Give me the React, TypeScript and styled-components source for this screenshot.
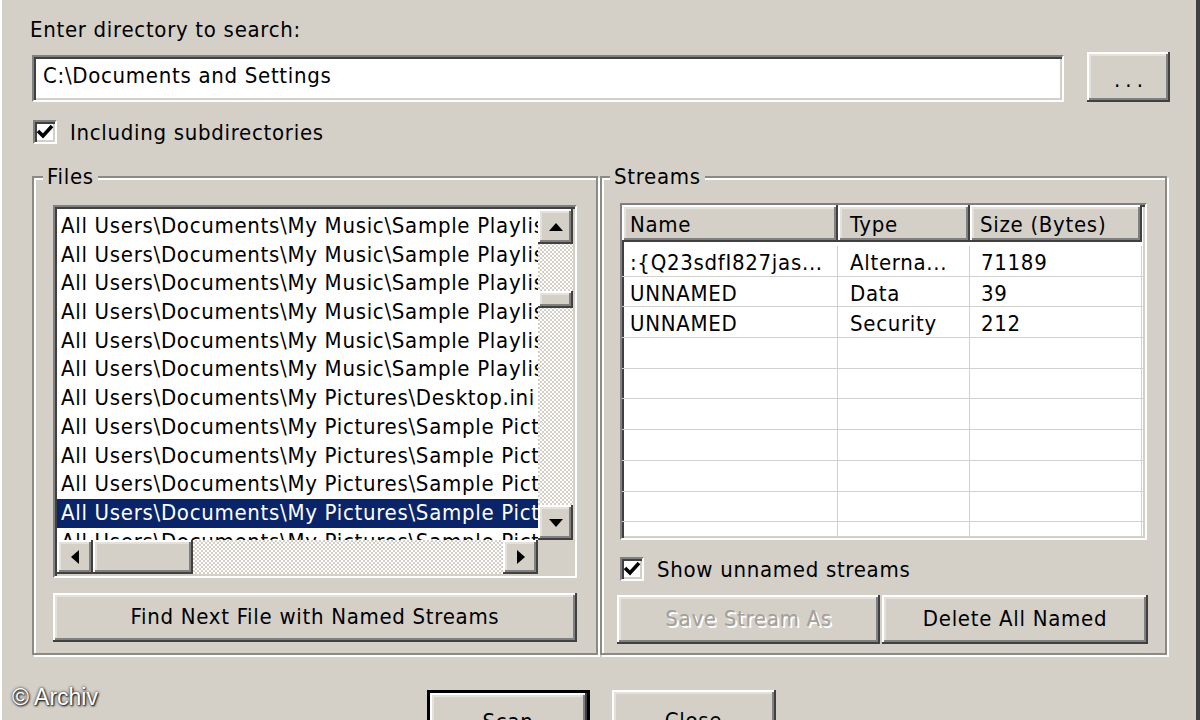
import React from 'react'
import styled, { createGlobalStyle, css } from 'styled-components'

const GlobalStyle = createGlobalStyle`
  html, body {
    margin: 0;
    padding: 0;
    background: #d4d0c8;
  }
  body {
    font-family: "DejaVu Sans Condensed", "DejaVu Sans", sans-serif;
    font-size: 22px;
    letter-spacing: 0.7px;
    color: #000;
  }
  * {
    box-sizing: border-box;
  }
`

const raised = css`
  background: #d4d0c8;
  box-shadow: inset -2px -2px 0 #404040, inset 2px 2px 0 #fff, inset -4px -4px 0 #808080,
    inset 4px 4px 0 #e4e1da;
`

const sunken = css`
  border: 2px solid;
  border-color: #808080 #fff #fff #808080;
  box-shadow: inset 2px 2px 0 #404040, inset -2px -2px 0 #d4d0c8;
`

const stipple = css`
  background-color: #ecebe7;
  background-image: repeating-conic-gradient(#d4d0c8 0 25%, #fff 0 50%);
  background-size: 4px 4px;
`

const Window = styled.div`
  position: relative;
  width: 1200px;
  height: 720px;
  overflow: hidden;
  display: flex;
  flex-direction: column;
  background: #d4d0c8;
  box-shadow: inset -4px 0 0 #404040, inset 2px 0 0 #fff;
`

const Content = styled.div`
  padding: 17px 0 0 30px;
  display: flex;
  flex-direction: column;
`

const Label = styled.div`
  height: 26px;
  line-height: 26px;
  white-space: nowrap;
`

const InputRow = styled.div`
  display: flex;
  align-items: flex-end;
  margin-top: 9px;
`

const PathInput = styled.div`
  margin-left: 2px;
  width: 1032px;
  height: 47px;
  background: #fff;
  ${sunken};
  display: flex;
  align-items: center;
  padding: 0 0 6px 9px;
  white-space: nowrap;
`

const Button = styled.div<{ $w: number; $h?: number; $disabled?: boolean }>`
  width: ${p => p.$w}px;
  height: ${p => p.$h ?? 49}px;
  flex: none;
  ${raised};
  display: flex;
  align-items: center;
  justify-content: center;
  padding-bottom: 2px;
  white-space: nowrap;
  color: ${p => (p.$disabled ? '#a3a09a' : '#000')};
  text-shadow: ${p => (p.$disabled ? '2px 2px 0 #fff' : 'none')};
`

const BrowseButton = styled(Button)`
  margin-left: 23px;
  letter-spacing: 5px;
  padding: 4px 0 0 5px;
`

const BottomButton = styled(Button)<{ $default?: boolean }>`
  border: ${p => (p.$default ? '3px solid #000' : 'none')};
  padding: 10px 0 0;
`

const CheckRow = styled.div<{ $mt: number; $ml?: number }>`
  display: flex;
  align-items: center;
  gap: 13px;
  height: 26px;
  margin-top: ${p => p.$mt}px;
  margin-left: ${p => p.$ml ?? 0}px;
  white-space: nowrap;
`

const Box = styled.div`
  width: 24px;
  height: 24px;
  background: #fff;
  ${sunken};
  display: flex;
  align-items: center;
  justify-content: center;
`

const GroupRow = styled.div`
  display: flex;
  gap: 2px;
  margin: 19px 0 0 2px;
`

const Group = styled.fieldset<{ $w: number; $pad: string }>`
  margin: 0;
  min-width: 0;
  width: ${p => p.$w}px;
  height: 491px;
  padding: ${p => p.$pad};
  border: 2px solid #8c8a85;
  box-shadow: inset 2px 2px 0 #fff, 2px 2px 0 #fff;
  display: flex;
  flex-direction: column;
`

const Legend = styled.legend`
  margin-left: -10px;
  padding: 0 4px;
  height: 26px;
  line-height: 26px;
  background: #d4d0c8;
`

const ListBox = styled.div`
  height: 373px;
  background: #fff;
  ${sunken};
  padding: 2px;
  display: grid;
  grid-template-columns: 1fr 35px;
  grid-template-rows: 1fr 34px;
`

const Items = styled.div`
  overflow: hidden;
  padding-top: 3px;
`

const Item = styled.div<{ $selected?: boolean }>`
  height: 28.7px;
  line-height: 28.7px;
  padding-left: 4px;
  white-space: nowrap;
  background: ${p => (p.$selected ? '#0a246a' : 'transparent')};
  color: ${p => (p.$selected ? '#fff' : '#000')};
`

const VScroll = styled.div`
  ${stipple};
  display: flex;
  flex-direction: column;
`

const HScroll = styled.div`
  ${stipple};
  display: flex;
`

const Track = styled.div<{ $before?: number }>`
  flex: 1;
  padding-top: ${p => p.$before ?? 0}px;
`

const Thumb = styled.div<{ $w?: number; $h?: number }>`
  flex: none;
  width: ${p => (p.$w ? `${p.$w}px` : '100%')};
  height: ${p => (p.$h ? `${p.$h}px` : '100%')};
  ${raised};
`

const ArrowButton = styled.div<{ $w: number; $h: number }>`
  flex: none;
  width: ${p => p.$w}px;
  height: ${p => p.$h}px;
  ${raised};
  display: flex;
  align-items: center;
  justify-content: center;
`

const Corner = styled.div`
  background: #d4d0c8;
`

const ListView = styled.div`
  height: 337px;
  background: #fff;
  ${sunken};
  overflow: hidden;
`

const Header = styled.div`
  display: flex;
  height: 37px;
`

const HeaderCell = styled.div<{ $w: number; $pl: number }>`
  flex: none;
  width: ${p => p.$w}px;
  ${raised};
  padding: 3px 0 0 ${p => p.$pl}px;
  line-height: 33px;
  white-space: nowrap;
`

const Body = styled.div`
  padding-top: 4px;
`

const Row = styled.div`
  display: flex;
  height: 30.7px;
  border-bottom: 1px solid #d2d1cd;
`

const Cell = styled.div<{ $w: number; $pl: number }>`
  flex: none;
  width: ${p => p.$w}px;
  padding: 3px 0 0 ${p => p.$pl}px;
  line-height: 27px;
  white-space: nowrap;
  overflow: hidden;
  border-right: 1px solid #d2d1cd;
`

const ButtonRow = styled.div`
  display: flex;
  gap: 2px;
  margin: 13px 0 0 -3px;
`

const BottomRow = styled.div`
  display: flex;
  justify-content: center;
  gap: 22px;
  margin-top: 35px;
  padding-left: 2px;
`

const Watermark = styled.div`
  position: absolute;
  left: 12px;
  bottom: 9px;
  font-family: "Liberation Sans", Arial, sans-serif;
  font-size: 23px;
  letter-spacing: 0;
  color: #fff;
  text-shadow: 0 0 3px #222, 1px 1px 2px #000;
`

const Check = () => (
  <svg width="18" height="18" viewBox="0 0 18 18">
    <polyline points="2,8 7,13 16,3" fill="none" stroke="#000" strokeWidth="3.6" />
  </svg>
)

const Arrow = ({ dir }: { dir: 'up' | 'down' | 'left' | 'right' }) => {
  const pts = {
    up: '0,8 7,0 14,8',
    down: '0,0 14,0 7,8',
    left: '8,0 8,14 0,7',
    right: '0,0 8,7 0,14',
  }[dir]
  const vertical = dir === 'up' || dir === 'down'
  return (
    <svg width={vertical ? 14 : 8} height={vertical ? 8 : 14} viewBox={vertical ? '0 0 14 8' : '0 0 8 14'}>
      <polygon points={pts} fill="#000" />
    </svg>
  )
}

const music = 'All Users\\Documents\\My Music\\Sample Playlists\\'
const pics = 'All Users\\Documents\\My Pictures\\'
const files = [
  music + '0001A3F1.WPL',
  music + '0001A3F2.WPL',
  music + '0001A3F3.WPL',
  music + '0001A3F4.WPL',
  music + '0001A3F5.WPL',
  music + 'Desktop.ini',
  pics + 'Desktop.ini',
  pics + 'Sample Pictures\\Blue hills.jpg',
  pics + 'Sample Pictures\\Desktop.ini',
  pics + 'Sample Pictures\\Sunset.jpg',
  pics + 'Sample Pictures\\Water lilies.jpg',
  pics + 'Sample Pictures\\Winter.jpg',
]

const streams = [
  [':{Q23sdfI827jas...', 'Alterna...', '71189'],
  ['UNNAMED', 'Data', '39'],
  ['UNNAMED', 'Security', '212'],
]

const cols = [
  { w: 216, pl: 8 },
  { w: 132, pl: 12 },
  { w: 172, pl: 11 },
]

const App = () => {
  const rows = [...streams, ...Array.from({ length: 8 }, () => ['', '', ''])]
  return (
    <>
      <GlobalStyle />
      <Window>
        <Content>
          <Label>Enter directory to search:</Label>
          <InputRow>
            <PathInput>C:\Documents and Settings</PathInput>
            <BrowseButton $w={83} $h={50}>...</BrowseButton>
          </InputRow>
          <CheckRow $mt={17} $ml={3}>
            <Box>
              <Check />
            </Box>
            Including subdirectories
          </CheckRow>

          <GroupRow>
            <Group $w={566} $pad="15px 19px 0 19px">
              <Legend>Files</Legend>
              <ListBox>
                <Items>
                  {files.map((f, i) => (
                    <Item key={i} $selected={i === 10}>
                      {f}
                    </Item>
                  ))}
                </Items>
                <VScroll>
                  <ArrowButton $w={35} $h={35}>
                    <Arrow dir="up" />
                  </ArrowButton>
                  <Track $before={47}>
                    <Thumb $h={17} />
                  </Track>
                  <ArrowButton $w={35} $h={35}>
                    <Arrow dir="down" />
                  </ArrowButton>
                </VScroll>
                <HScroll>
                  <ArrowButton $w={36} $h={34}>
                    <Arrow dir="left" />
                  </ArrowButton>
                  <Thumb $w={100} />
                  <Track />
                  <ArrowButton $w={35} $h={34}>
                    <Arrow dir="right" />
                  </ArrowButton>
                </HScroll>
                <Corner />
              </ListBox>
              <Button $w={524} style={{ marginTop: 15 }}>
                Find Next File with Named Streams
              </Button>
            </Group>

            <Group $w={567} $pad="13px 18px 0 18px">
              <Legend>Streams</Legend>
              <ListView>
                <Header>
                  <HeaderCell $w={216} $pl={8}>Name</HeaderCell>
                  <HeaderCell $w={132} $pl={12}>Type</HeaderCell>
                  <HeaderCell $w={172} $pl={10}>Size (Bytes)</HeaderCell>
                </Header>
                <Body>
                  {rows.map((r, i) => (
                    <Row key={i}>
                      {r.map((c, j) => (
                        <Cell key={j} $w={cols[j].w} $pl={cols[j].pl}>
                          {c}
                        </Cell>
                      ))}
                    </Row>
                  ))}
                </Body>
              </ListView>
              <CheckRow $mt={16}>
                <Box>
                  <Check />
                </Box>
                Show unnamed streams
              </CheckRow>
              <ButtonRow>
                <Button $w={263} $disabled>
                  Save Stream As
                </Button>
                <Button $w={266}>Delete All Named</Button>
              </ButtonRow>
            </Group>
          </GroupRow>
        </Content>

        <BottomRow>
          <BottomButton $w={163} $h={52} $default>
            Scan
          </BottomButton>
          <BottomButton $w={164} $h={50}>
            Close
          </BottomButton>
        </BottomRow>
        <Watermark>© Archiv</Watermark>
      </Window>
    </>
  )
}

export default App
